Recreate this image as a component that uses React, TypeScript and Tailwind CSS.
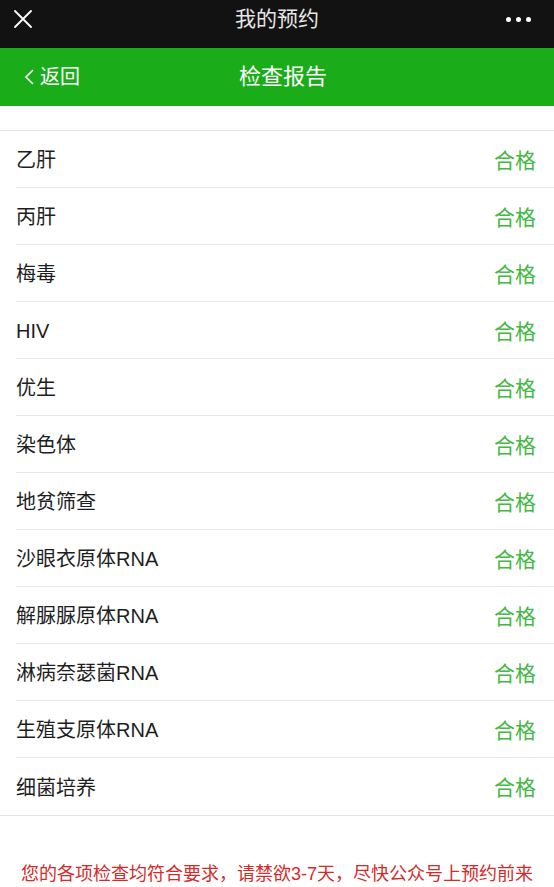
const items = [
  '乙肝',
  '丙肝',
  '梅毒',
  'HIV',
  '优生',
  '染色体',
  '地贫筛查',
  '沙眼衣原体RNA',
  '解脲脲原体RNA',
  '淋病奈瑟菌RNA',
  '生殖支原体RNA',
  '细菌培养',
]

export default function App() {
  return (
    <div
      className="min-h-screen bg-white"
      style={{ fontFamily: '"Liberation Sans", "Noto Sans CJK SC", sans-serif' }}
    >
      {/* top bar */}
      <div className="relative flex h-[48px] items-start justify-center bg-[#121212] pt-[5px]">
        <svg className="absolute left-[14px] top-[10px]" width="18" height="18" viewBox="0 0 18 18">
          <path d="M1 1L17 17M17 1L1 17" stroke="#fff" strokeWidth="1.8" strokeLinecap="round" />
        </svg>
        <span className="text-[21px] leading-[28px] text-[#e6e6e6]">我的预约</span>
        <div className="absolute right-[23px] top-[17px] flex gap-[5px]">
          <span className="h-[5px] w-[5px] rounded-full bg-white" />
          <span className="h-[5px] w-[5px] rounded-full bg-white" />
          <span className="h-[5px] w-[5px] rounded-full bg-white" />
        </div>
      </div>

      {/* green nav */}
      <div className="relative flex h-[58px] items-center justify-center bg-[#1aad19] pl-[12px]">
        <div className="absolute left-[24px] top-0 flex h-full items-center gap-[5px]">
          <svg width="11" height="18" viewBox="0 0 11 18">
            <path d="M9 2L2 9L9 16" stroke="#fff" strokeWidth="1.6" fill="none" />
          </svg>
          <span className="text-[20px] leading-none text-white">返回</span>
        </div>
        <span className="text-[22px] leading-none text-white">检查报告</span>
      </div>

      <div className="h-[24px]" />

      <div className="border-y border-[#e5e5e5]">
        {items.map((name, i) => (
          <div key={name} className="pl-[16px]">
            <div
              className={
                i === items.length - 1
                  ? 'flex h-[57px] items-center justify-between pr-[18px] pt-[2px]'
                  : 'flex h-[57px] items-center justify-between border-b border-[#e8e8e8] pr-[18px] pt-[2px]'
              }
            >
              <span className="text-[20px] leading-none text-[#1e1e1e]">{name}</span>
              <span className="text-[21px] leading-none text-[#45b843]">合格</span>
            </div>
          </div>
        ))}
      </div>

      <p className="mt-[46px] whitespace-nowrap text-center text-[18px] leading-[24px] text-[#d42a2a]">
        您的各项检查均符合要求，请禁欲3-7天，尽快公众号上预约前来
      </p>
    </div>
  )
}
